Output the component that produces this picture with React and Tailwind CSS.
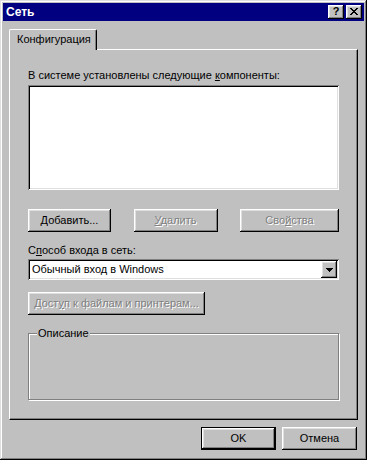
const RAISED =
  'shadow-[inset_-1px_-1px_#000,inset_1px_1px_#fff,inset_-2px_-2px_#808080,inset_2px_2px_#dfdfdf]';
const SUNKEN =
  'shadow-[inset_1px_1px_#808080,inset_-1px_-1px_#fff,inset_2px_2px_#000,inset_-2px_-2px_#dfdfdf]';
const DISABLED = 'text-[#808080] [text-shadow:1px_1px_0_#fff]';

function CloseGlyph() {
  const rows = ['##....##', '.##..##.', '..####..', '...##...', '..####..', '.##..##.', '##....##'];
  return (
    <svg width="8" height="7" viewBox="0 0 8 7" shapeRendering="crispEdges">
      {rows.map((r, y) =>
        r.split('').map((c, x) => (c === '#' ? <rect key={`${x}-${y}`} x={x} y={y} width="1" height="1" fill="#000" /> : null))
      )}
    </svg>
  );
}

function Button({ width, disabled, children, isDefault }) {
  return (
    <div
      className={`h-[23px] flex items-center justify-center bg-[#c0c0c0] ${
        isDefault
          ? 'shadow-[inset_0_0_0_1px_#000,inset_-2px_-2px_#000,inset_2px_2px_#fff,inset_-3px_-3px_#808080,inset_3px_3px_#dfdfdf]'
          : RAISED
      } ${disabled ? DISABLED : 'text-black'}`}
      style={{ width }}
    >
      {children}
    </div>
  );
}

export default function App() {
  return (
    <div className="w-[367px] h-[460px] bg-[#c0c0c0] p-[3px] shadow-[inset_-1px_-1px_#000,inset_1px_1px_#dfdfdf,inset_-2px_-2px_#808080,inset_2px_2px_#fff] font-['Liberation_Sans',Arial,sans-serif] text-[11px] leading-[13px] text-black select-none">
      {/* title bar */}
      <div className="h-[18px] bg-[#000080] flex items-center pl-[3px] pr-[2px]">
        <span className="text-white font-bold text-[12px]">Сеть</span>
        <div className="ml-auto flex gap-[2px]">
          <div className={`w-[16px] h-[14px] bg-[#c0c0c0] ${RAISED} flex items-center justify-center font-bold text-[11px] leading-none pb-[1px]`}>
            ?
          </div>
          <div className={`w-[16px] h-[14px] bg-[#c0c0c0] ${RAISED} flex items-center justify-center pb-[1px]`}>
            <CloseGlyph />
          </div>
        </div>
      </div>

      <div className="px-[6px] mt-[8px]">
        {/* tab */}
        <div className="relative z-10 -mb-px w-[88px] h-[21px] bg-[#c0c0c0] border-t border-l border-white border-r border-r-black rounded-t-[2px] shadow-[inset_-1px_0_#808080] flex items-center pl-[7px] pb-[1px]">
          Конфигурация
        </div>

        {/* panel */}
        <div className="h-[371px] border-t border-l border-white border-r border-b border-r-black border-b-black shadow-[inset_-1px_-1px_#808080] px-[18px] pt-[19px]">
          <div className="h-[13px]">
            В системе установлены следующие <span className="underline">к</span>омпоненты:
          </div>
          <div className={`mt-[3px] h-[105px] bg-white ${SUNKEN}`} />

          <div className="mt-[19px] flex justify-between">
            <Button width={83}>
              <span>
                <span className="underline">Д</span>обавить...
              </span>
            </Button>
            <Button width={84} disabled>
              <span>
                <span className="underline">У</span>далить
              </span>
            </Button>
            <Button width={99} disabled>
              <span>
                Сво<span className="underline">й</span>ства
              </span>
            </Button>
          </div>

          <div className="mt-[12px] h-[13px]">
            С<span className="underline">п</span>особ входа в сеть:
          </div>
          <div className={`mt-[2px] h-[21px] bg-white ${SUNKEN} flex items-center pl-[4px] pr-[2px]`}>
            <span>Обычный вход в Windows</span>
            <div className={`ml-auto w-[16px] h-[17px] bg-[#c0c0c0] ${RAISED} flex items-center justify-center`}>
              <svg width="7" height="4" viewBox="0 0 7 4" shapeRendering="crispEdges">
                <path d="M0 0h7v1h-1v1h-1v1h-1v1h-1v-1h-1v-1h-1v-1h-1z" fill="#000" />
              </svg>
            </div>
          </div>

          <div className="mt-[12px]">
            <Button width={177} disabled>
              <span>
                Дост<span className="underline">у</span>п к файлам и принтерам...
              </span>
            </Button>
          </div>

          <div className="relative mt-[18px] h-[67px] border border-[#808080] shadow-[inset_1px_1px_#fff,1px_1px_#fff]">
            <span className="absolute -top-[7px] left-[8px] bg-[#c0c0c0] px-[1px]">Описание</span>
          </div>
        </div>
      </div>

      <div className="mt-[7px] flex justify-end gap-[6px] pr-[7px]">
        <Button width={75} isDefault>
          OK
        </Button>
        <Button width={75}>Отмена</Button>
      </div>
    </div>
  );
}
